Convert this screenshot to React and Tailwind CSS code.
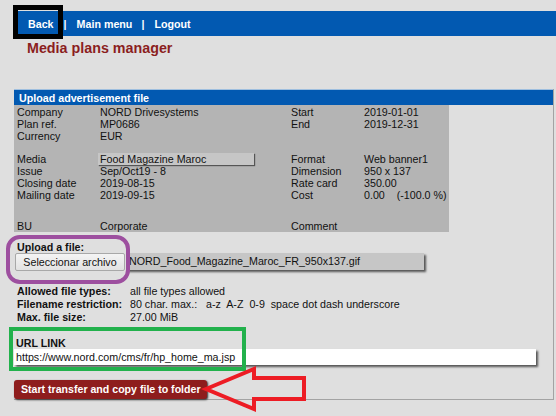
const LEFT = [
  ['Company', 'NORD Drivesystems', 'Start', '2019-01-01'],
  ['Plan ref.', 'MP0686', 'End', '2019-12-31'],
  ['Currency', 'EUR', '', ''],
]

const MIDDLE = [
  ['Issue', 'Sep/Oct19 - 8', 'Dimension', '950 x 137'],
  ['Closing date', '2019-08-15', 'Rate card', '350.00'],
  ['Mailing date', '2019-09-15', 'Cost', '0.00    (-100.0 %)'],
]

function InfoRow({ row, h = 'h-[12px]' }) {
  return (
    <div className={`flex ${h} items-center`}>
      <span className="w-[83px]">{row[0]}</span>
      <span className="w-[191px]">{row[1]}</span>
      <span className="w-[73px]">{row[2]}</span>
      <span className="whitespace-pre">{row[3]}</span>
    </div>
  )
}

export default function App() {
  return (
    <div className="relative w-[556px] h-[416px] overflow-hidden bg-[#dfdfdf] text-[10.7px] leading-[12px] text-[#111] font-['Liberation_Sans',Arial,sans-serif]">
      {/* top nav */}
      <div className="mt-[11px] ml-[13px] h-[25px] bg-[#0259b1] flex items-center text-white font-bold">
        <span className="ml-[15px]">Back</span>
        <span className="ml-[10px]">|</span>
        <span className="ml-[10px]">Main menu</span>
        <span className="ml-[9px]">|</span>
        <span className="ml-[10px]">Logout</span>
      </div>
      <div className="mt-[4px] ml-[27px] text-[14.3px] leading-[17px] font-bold text-[#8b1e1e]">
        Media plans manager
      </div>

      {/* panel */}
      <div className="mt-[32px] ml-[14px] w-[540px] border-r border-b border-[#a3a3a3]">
        <div className="h-[16px] bg-[#0259b1] border-t border-[#9fbfdf] flex items-center pl-[5px] text-white font-bold">
          Upload advertisement file
        </div>
        <div className="w-[435px] bg-[#b4b4b4] pl-[3px] pt-[1px]">
          {LEFT.map(r => <InfoRow key={r[0]} row={r} />)}
          <div className="h-[10px]" />
          <div className="flex h-[13px] items-center">
            <span className="w-[83px]">Media</span>
            <span className="w-[191px]">
              <span className="block w-[156px] h-[12px] -ml-[2px] pl-[2px] bg-[#c6c6c6] shadow-[1px_1px_1px_#555] leading-[12px]">
                Food Magazine Maroc
              </span>
            </span>
            <span className="w-[73px]">Format</span>
            <span>Web banner1</span>
          </div>
          {MIDDLE.map(r => <InfoRow key={r[0]} row={r} />)}
          <div className="h-[18px]" />
          <InfoRow row={['BU', 'Corporate', 'Comment', '']} h="h-[13px]" />
        </div>

        <div className="mt-[9px] pl-[3px] font-bold">Upload a file:</div>
        <div className="flex items-start">
          <button className="ml-[1px] w-[110px] h-[18px] border border-[#a8a8a8] rounded-[2px] bg-gradient-to-b from-[#f4f4f4] to-[#e2e2e2] text-[10.7px] leading-[16px] text-[#111] whitespace-nowrap">
            Seleccionar archivo
          </button>
          <div className="ml-[1px] w-[298px] h-[17px] bg-[#c6c6c6] shadow-[2px_2px_2px_#555] pl-[3px] leading-[17px]">
            NORD_Food_Magazine_Maroc_FR_950x137.gif
          </div>
        </div>

        <div className="mt-[14px] pl-[3px] leading-[13px]">
          <div className="flex">
            <span className="w-[113px] font-bold">Allowed file types:</span>
            <span>all file types allowed</span>
          </div>
          <div className="flex">
            <span className="w-[113px] font-bold">Filename restriction:</span>
            <span className="whitespace-pre">80 char. max.:   a-z  A-Z  0-9  space dot dash underscore</span>
          </div>
          <div className="flex">
            <span className="w-[113px] font-bold">Max. file size:</span>
            <span>27.00 MiB</span>
          </div>
        </div>

        <div className="mt-[13px] pl-[2px] font-bold">URL LINK</div>
        <div className="w-[522px] h-[16px] bg-white shadow-[2px_2px_2px_#555] pl-[2px] leading-[16px]">
          https://www.nord.com/cms/fr/hp_home_ma.jsp
        </div>

        <button className="mt-[15px] block w-[193px] h-[19px] rounded-[3px] bg-[#8e1d1d] shadow-[1px_1px_2px_#333] text-white font-bold text-[10.6px] leading-[19px] text-left pl-[7px] whitespace-nowrap overflow-hidden">
          Start transfer and copy file to folder
        </button>
      </div>

      {/* annotations */}
      <div className="absolute left-[13px] top-[5px] w-[50px] h-[34px] border-[5px] border-black" />
      <div className="absolute left-[6px] top-[235px] w-[124px] h-[49px] border-[4px] border-[#9d4f9f] rounded-[14px]" />
      <div className="absolute left-[9px] top-[327px] w-[237px] h-[44px] border-[4px] border-[#22b14c]" />
      <svg className="absolute left-0 top-0 pointer-events-none" width="556" height="416">
        <polygon
          points="206,389 254,369 254,378 304,378 304,399 254,399 254,409"
          fill="none"
          stroke="#ed1c24"
          strokeWidth="4"
          strokeLinejoin="miter"
        />
      </svg>
    </div>
  )
}
